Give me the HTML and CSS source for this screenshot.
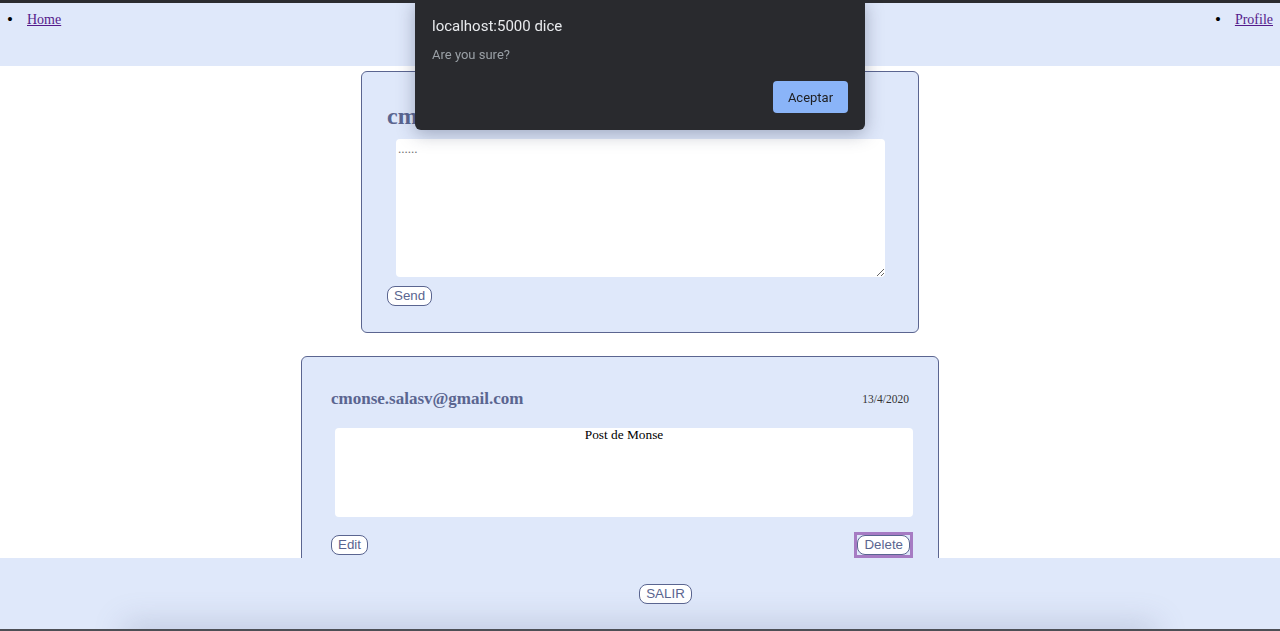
FILE: index.html
```html
<!DOCTYPE html>
<html lang="es">
<head>
<meta charset="utf-8">
<title>Posts</title>
<link rel="stylesheet" href="styles.css">
</head>
<body>
<nav class="topnav">
  <ul class="nav-list">
    <li class="nav-item"><a href="#" class="nav-link">Home</a></li>
    <li class="nav-item"><a href="#" class="nav-link">Profile</a></li>
  </ul>
</nav>

<main class="main">
  <section class="card card-new">
    <h2 class="card-title">cmonse.salasv@gmail.com</h2>
    <textarea class="new-text" placeholder="......"></textarea>
    <button class="btn btn-tall">Send</button>
  </section>

  <section class="card card-post">
    <div class="post-head">
      <h3 class="post-author">cmonse.salasv@gmail.com</h3>
      <span class="post-date">13/4/2020</span>
    </div>
    <div class="post-body">Post de Monse</div>
    <div class="post-actions">
      <button class="btn">Edit</button>
      <span class="focus-ring"><button class="btn">Delete</button></span>
    </div>
  </section>
</main>

<footer class="footer">
  <button class="btn btn-tall">SALIR</button>
</footer>

<div class="dialog">
  <div class="dialog-title">localhost:5000 dice</div>
  <div class="dialog-msg">Are you sure?</div>
  <div class="dialog-actions">
    <button class="dialog-btn">Aceptar</button>
  </div>
</div>
</body>
</html>
```

FILE: styles.css
```css
html, body {
  margin: 0;
  padding: 0;
  background: #ffffff;
  font-family: "Liberation Serif", "Times New Roman", serif;
}

body {
  border-top: 3px solid #2b2c30;
  min-height: 628px;
}

.topnav {
  background: #dfe8fa;
  height: 63px;
}

.nav-list {
  margin: 0;
  padding: 9px 7px 0 7px;
  list-style: none;
  display: flex;
  justify-content: space-between;
  font-size: 14px;
  line-height: 16px;
}

.nav-item {
  display: flex;
}

.nav-item::before {
  content: "\2022";
  width: 20px;
  font-size: 17px;
  color: #000000;
}

.nav-link {
  color: #551a8b;
}

.main {
  padding-top: 5px;
}

.card {
  background: #dfe8fa;
  border: 1px solid #5b6590;
  border-radius: 6px;
  box-sizing: border-box;
}

.card-new {
  width: 558px;
  margin-left: 361px;
  padding: 29px 25px 26px 25px;
}

.card-title {
  margin: 0;
  font-size: 24px;
  line-height: 30px;
  font-weight: bold;
  color: #5a6590;
  white-space: nowrap;
}

.new-text {
  display: block;
  margin: 8px 0 9px 9px;
  width: 489px;
  height: 138px;
  box-sizing: border-box;
  border: none;
  border-radius: 4px;
  background: #ffffff;
  padding: 2px;
  font-family: "Liberation Serif", serif;
  font-size: 13px;
}

.new-text::placeholder {
  color: #757575;
}

.card-post {
  width: 638px;
  margin-left: 301px;
  margin-top: 23px;
  padding: 30px 29px 30px 29px;
}

.post-head {
  display: flex;
  justify-content: space-between;
  align-items: center;
  height: 24px;
}

.post-author {
  margin: 0;
  font-size: 17px;
  font-weight: bold;
  color: #5a6590;
}

.post-date {
  font-size: 11.5px;
  color: #333333;
}

.post-body {
  margin: 17px 0 0 4px;
  width: 578px;
  height: 89px;
  background: #ffffff;
  border-radius: 4px;
  text-align: center;
  font-size: 13.33px;
  line-height: 14px;
  color: #000000;
}

.post-actions {
  display: flex;
  justify-content: space-between;
  align-items: center;
  margin-top: 15px;
  margin-right: -4px;
}

.btn {
  font-family: "Liberation Sans", Arial, sans-serif;
  font-size: 13.33px;
  line-height: 16px;
  padding: 1px 6px;
  color: #5a6590;
  background: #ffffff;
  border: 1px solid #5a6590;
  border-radius: 8px;
  cursor: pointer;
}

.btn-tall {
  line-height: 16px;
  padding: 1px 6px 1px 6px;
  height: 20px;
}

.focus-ring {
  display: inline-flex;
  border: 3px solid #a67bc3;
  padding: 0;
  background: #dfe8fa;
}

.footer {
  position: fixed;
  left: 0;
  right: 0;
  bottom: 0;
  height: 73px;
  background: #dfe8fa;
  display: flex;
  align-items: center;
  justify-content: center;
  padding-left: 51px;
  overflow: hidden;
  border-bottom: 2px solid #4d4f55;
  box-sizing: border-box;
}

.footer::after {
  content: "";
  position: absolute;
  left: 130px;
  right: 130px;
  bottom: -14px;
  height: 14px;
  box-shadow: 0 0 30px 6px rgba(120, 130, 165, 0.3);
}

.dialog {
  position: fixed;
  top: 0;
  left: 415px;
  width: 450px;
  height: 130px;
  box-sizing: border-box;
  background: #292a2e;
  border-radius: 0 0 6px 6px;
  box-shadow: 0 4px 18px rgba(40, 50, 80, 0.35);
  padding: 17px 17px 0 17px;
  font-family: Roboto, "Liberation Sans", Arial, sans-serif;
}

.dialog-title {
  font-size: 15px;
  line-height: 18px;
  color: #e8eaed;
}

.dialog-msg {
  margin-top: 12px;
  font-size: 13px;
  line-height: 16px;
  color: #9aa0a6;
}

.dialog-actions {
  display: flex;
  justify-content: flex-end;
  margin-top: 18px;
}

.dialog-btn {
  width: 75px;
  height: 32px;
  border: none;
  border-radius: 4px;
  background: #8ab4f8;
  color: #202124;
  font-family: Roboto, "Liberation Sans", Arial, sans-serif;
  font-size: 13px;
}
```
